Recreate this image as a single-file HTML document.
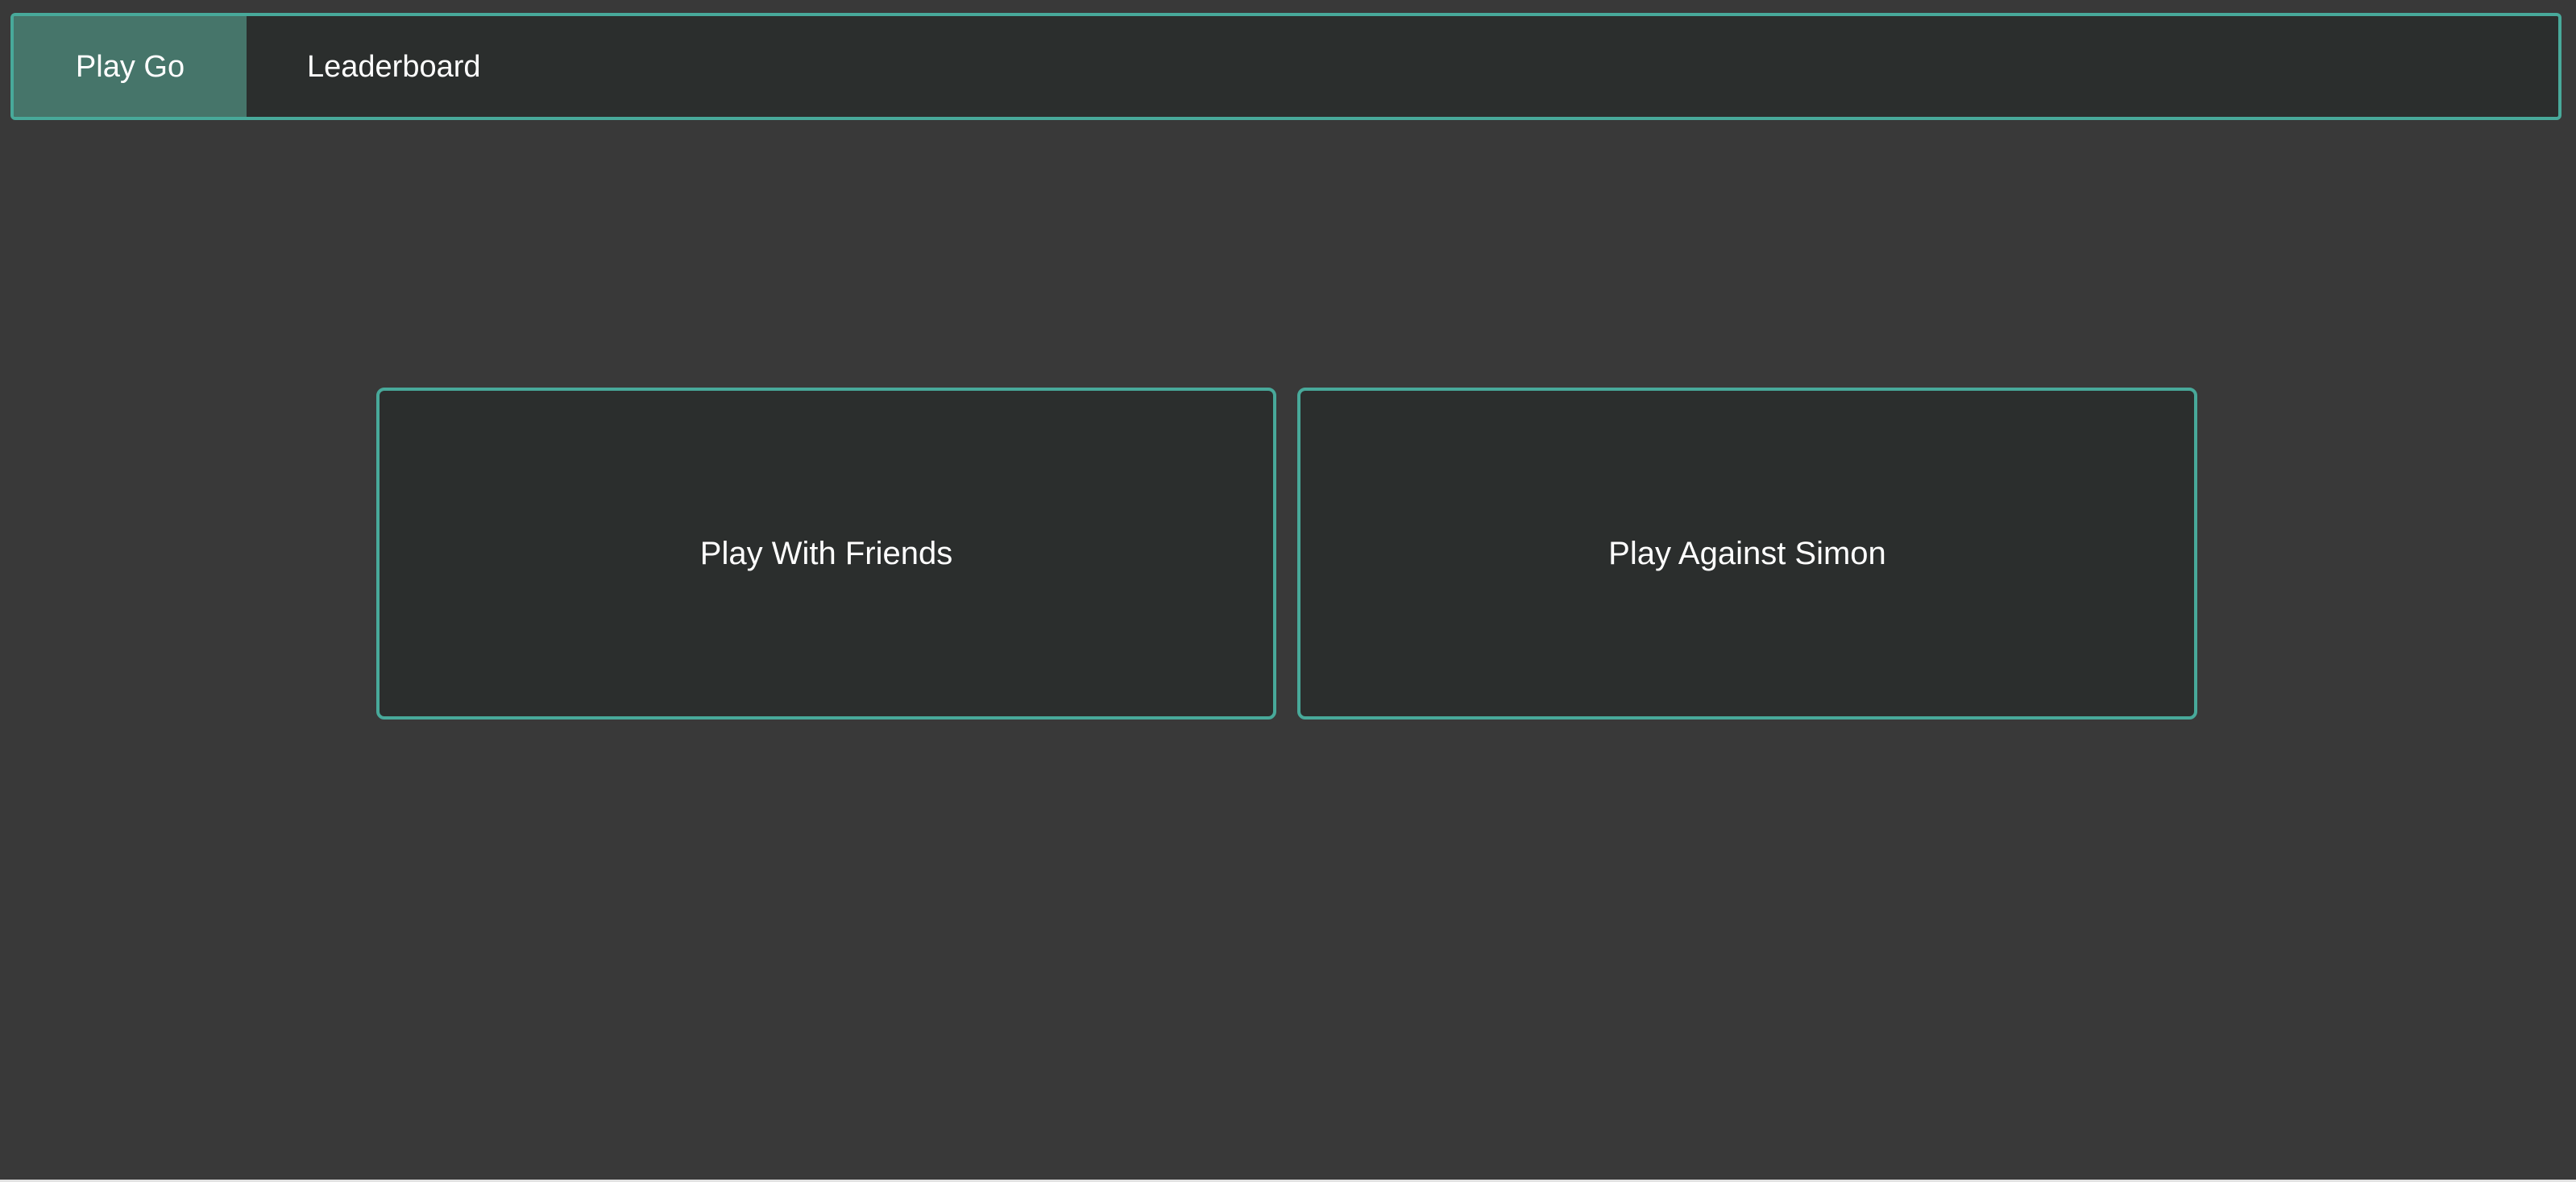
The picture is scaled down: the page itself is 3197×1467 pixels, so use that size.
<!DOCTYPE html>
<html><head><style>
html,body{margin:0;padding:0;}
body{width:3197px;height:1467px;background:#393939;font-family:"Liberation Sans",Arial,sans-serif;color:#fff;position:relative;overflow:hidden;}
.strip{position:absolute;left:0;right:0;bottom:0;height:3px;background:#e2e2e2;}
.nav{position:absolute;left:13px;top:16px;width:3166px;height:133px;box-sizing:border-box;border:4px solid #48a99a;border-radius:6px;background:#2b2e2d;overflow:hidden;}
.tab{position:absolute;top:0;height:100%;display:flex;align-items:center;font-size:38px;padding-top:2px;box-sizing:border-box;}
.t1{left:0;width:289px;background:#46756a;justify-content:center;}
.t2{left:364px;}
.card{position:absolute;top:481px;height:412px;width:1117px;box-sizing:border-box;border:4px solid #48a99a;border-radius:10px;background:#2b2e2d;display:flex;align-items:center;justify-content:center;font-size:40px;}
</style></head><body>
<div class="nav"><div class="tab t1">Play Go</div><div class="tab t2">Leaderboard</div></div>
<div class="card" style="left:467px">Play With Friends</div>
<div class="card" style="left:1610px">Play Against Simon</div>
<div class="strip"></div>
</body></html>
